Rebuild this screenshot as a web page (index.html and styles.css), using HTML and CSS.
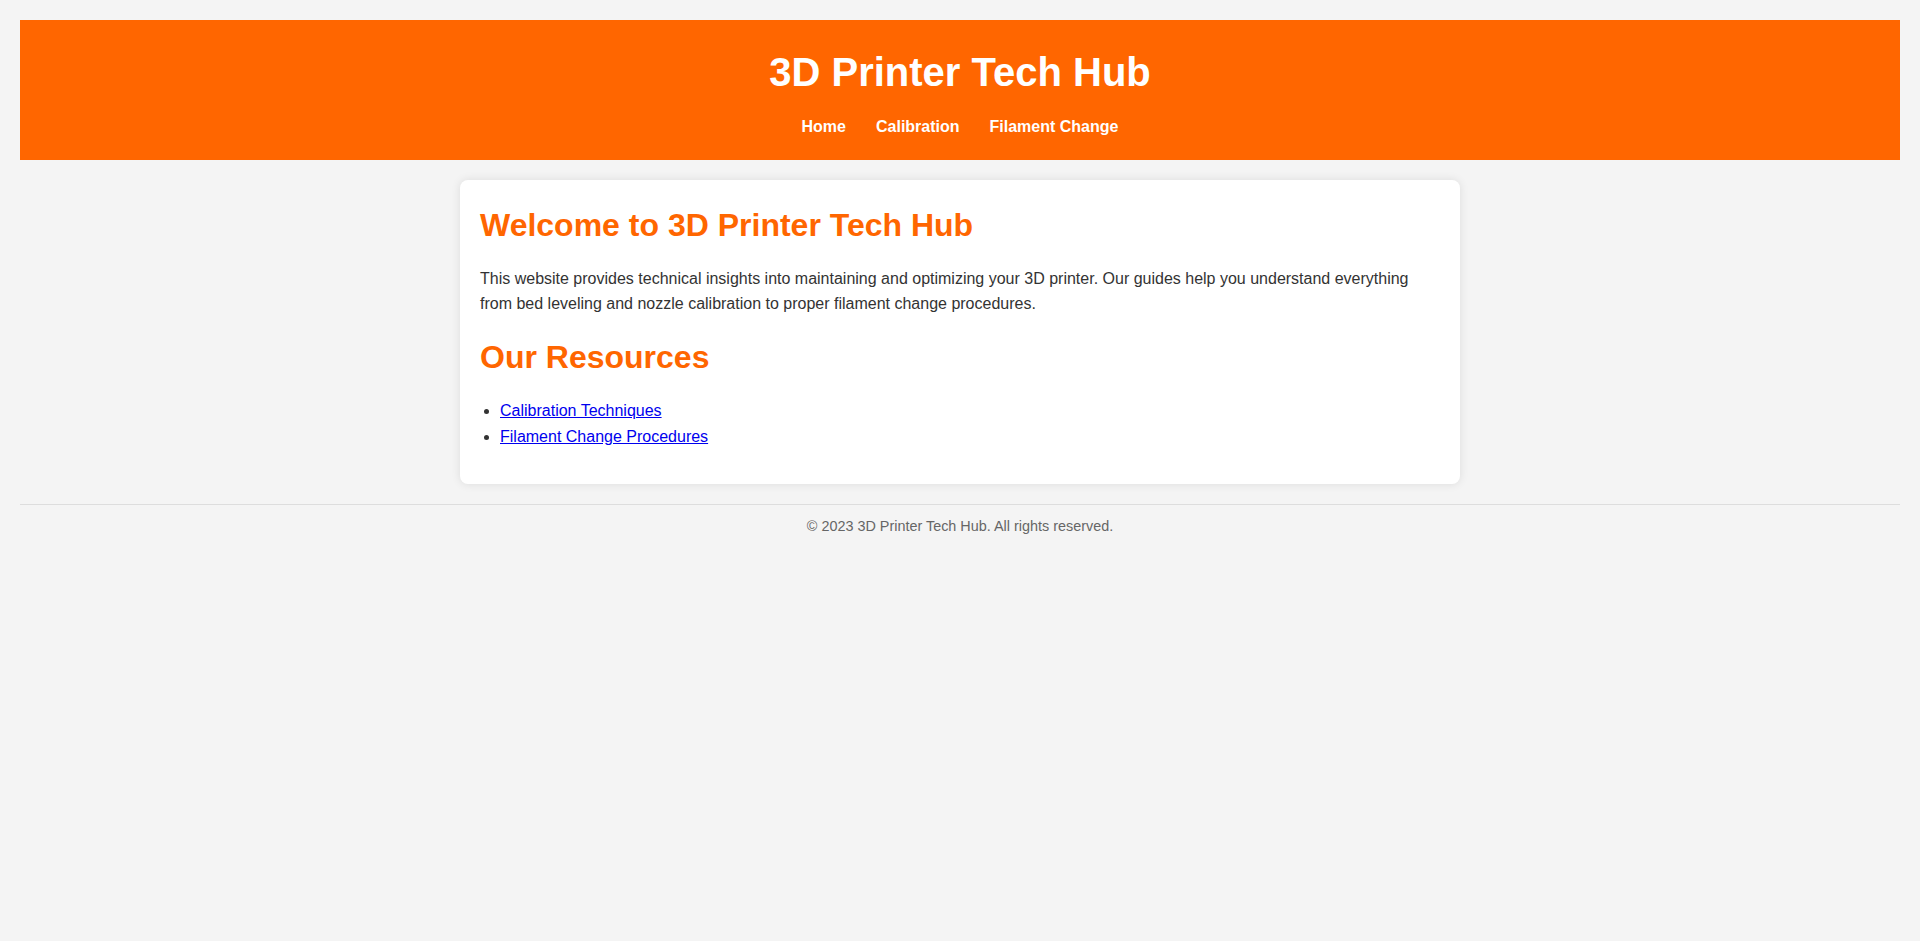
FILE: index.html
```
<!DOCTYPE html>
<html lang="en">
<head>
<meta charset="utf-8">
<title>3D Printer Tech Hub</title>
<link rel="stylesheet" href="styles.css">
</head>
<body>
<header class="site-header">
  <h1 class="site-title">3D Printer Tech Hub</h1>
  <nav class="site-nav">
    <a href="#">Home</a>
    <a href="#">Calibration</a>
    <a href="#">Filament Change</a>
  </nav>
</header>
<main class="card">
  <h2 class="card-heading">Welcome to 3D Printer Tech Hub</h2>
  <p class="card-text">This website provides technical insights into maintaining and optimizing your 3D printer. Our guides help you understand everything from bed leveling and nozzle calibration to proper filament change procedures.</p>
  <h2 class="card-heading">Our Resources</h2>
  <ul class="resource-list">
    <li><a href="#">Calibration Techniques</a></li>
    <li><a href="#">Filament Change Procedures</a></li>
  </ul>
</main>
<footer class="site-footer">
  <p class="footer-text">&copy; 2023 3D Printer Tech Hub. All rights reserved.</p>
</footer>
</body>
</html>
```
FILE: styles.css
```
html, body {
  background: #f4f4f4;
}
body {
  margin: 0;
  padding: 20px;
  font-family: "Liberation Sans", Arial, sans-serif;
  font-size: 16px;
  line-height: 1.6;
  color: #333;
}
.site-header {
  background: #ff6600;
  color: #fff;
  padding: 20px;
  text-align: center;
}
.site-title {
  margin: 0;
  font-size: 40px;
  font-weight: bold;
}
.site-nav {
  margin-top: 10px;
  display: flex;
  justify-content: center;
  gap: 30px;
}
.site-nav a {
  color: #fff;
  text-decoration: none;
  font-weight: bold;
}
.card {
  display: block;
  max-width: 1000px;
  box-sizing: border-box;
  margin: 20px auto;
  padding: 20px;
  background: #fff;
  border-radius: 8px;
  box-shadow: 0 0 10px rgba(0, 0, 0, 0.1);
}
.card-heading {
  color: #ff6600;
  font-size: 32px;
  margin: 0;
}
.card-text {
  margin: 15px 0;
}
.resource-list {
  margin: 15px 0 15px;
  padding-left: 20px;
}
.site-footer {
  border-top: 1px solid #ddd;
  margin-top: 20px;
  padding: 10px 0 0;
  text-align: center;
  color: #666;
  font-size: 14.4px;
}
.footer-text {
  margin: 0;
}
```
